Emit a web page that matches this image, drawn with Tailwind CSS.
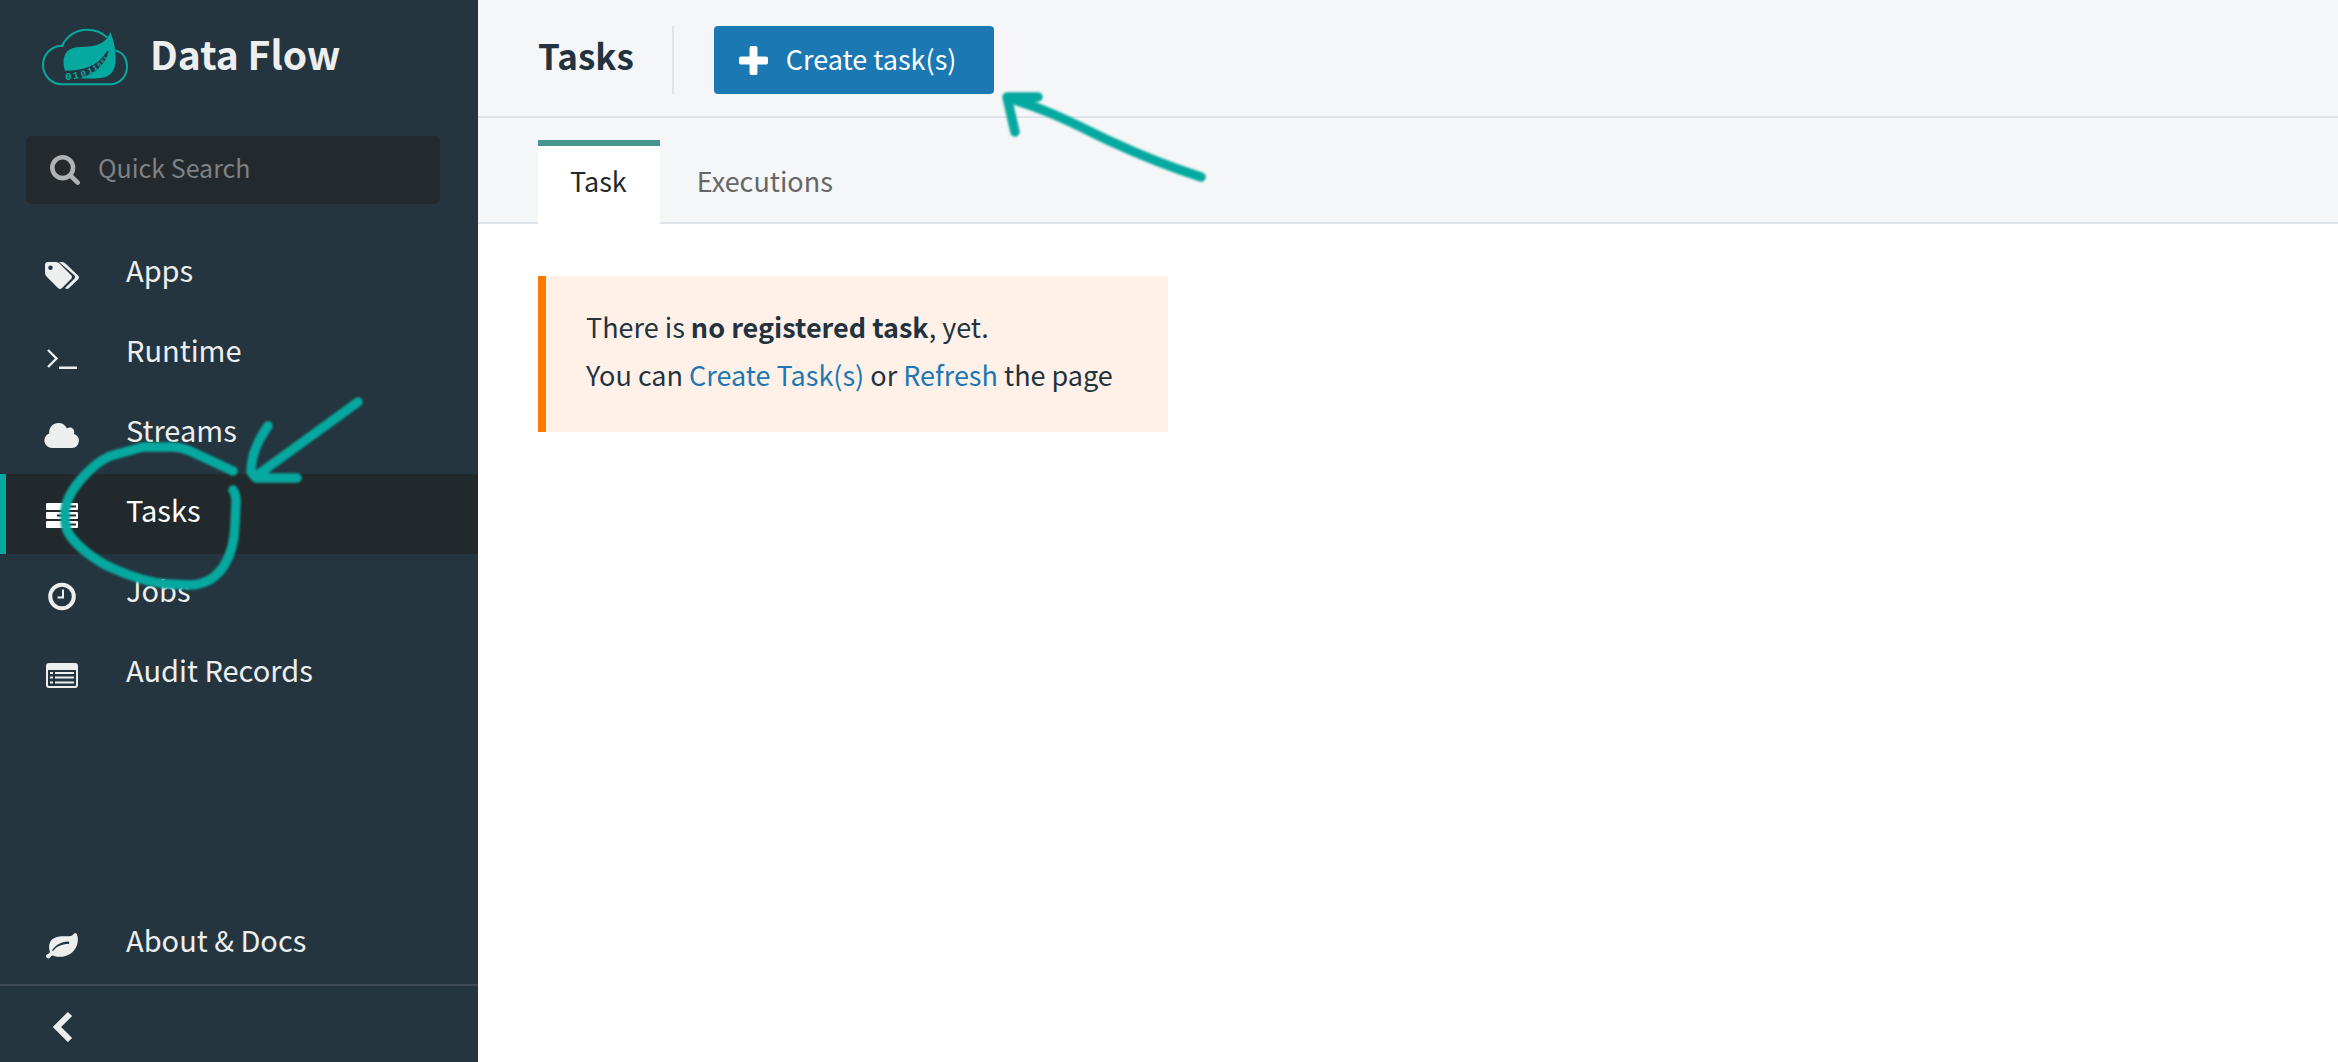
<!DOCTYPE html>
<html lang="en">
<head>
<meta charset="utf-8">
<meta name="viewport" content="width=device-width, initial-scale=1">
<title>Data Flow - Tasks</title>
<script src="https://cdn.jsdelivr.net/npm/@tailwindcss/browser@4"></script>
</head>
<body class="relative flex min-h-screen bg-white font-['Noto_Sans_CJK_SC','Open_Sans',sans-serif] text-[#22333f]">

<aside class="flex w-[478px] shrink-0 flex-col bg-[#243540] text-[#edefee]">
  <a href="#" class="flex h-[114px] items-center gap-[22px] pl-[42px]">
    <!-- Cloud with leaf -->
    <svg class="h-[58px] w-[86px]" viewBox="36 54 258 174" aria-hidden="true">
      <path d="M97 223 A58 58 0 0 1 97 107 C110 77 140 59 171 59 C196 59 216 67 232 83 M257 121 C278 128 291 146 291 170 C291 200 268 223 240 223 H97" fill="none" stroke="#06a99f" stroke-width="6"/>
      <path d="M241 66 C252 92 258 122 257 152 C255 186 238 202 210 204 C190 206 170 206 150 205 C195 192 228 162 236 124 C233 122 230 124 228 128 C203 168 160 182 105 182 C96 152 98 112 150 111 C200 111 230 100 241 66Z" fill="#06a99f"/>
      <g fill="#06a99f" font-family="Liberation Mono, monospace" font-weight="700" text-anchor="middle">
        <text x="115" y="210" font-size="34">0</text>
        <text x="139" y="206" font-size="30" transform="rotate(-8 139 206)">1</text>
        <text x="162" y="200" font-size="28" transform="rotate(-12 162 200)">0</text>
        <text x="183" y="190" font-size="26" transform="rotate(-20 183 190)">1</text>
        <text x="198" y="180" font-size="23" transform="rotate(-28 198 180)">1</text>
        <text x="212" y="169" font-size="20" transform="rotate(-38 212 169)">0</text>
        <text x="222" y="158" font-size="17" transform="rotate(-45 222 158)">0</text>
        <text x="230" y="147" font-size="15" transform="rotate(-55 230 147)">1</text>
      </g>
    </svg>
    <span class="pb-2 text-[39px] leading-[50px] font-bold">Data Flow</span>
  </a>

  <label class="mr-[38px] ml-[26px] mt-[22px] flex h-[68px] items-center gap-[18px] rounded-md bg-[#24292d] pl-[24px]">
    <svg class="size-[30px] shrink-0 text-[#b0b2b3]" viewBox="64 128 1664 1664" fill="currentColor" aria-hidden="true"><path d="M1216 832q0-185-131.500-316.500T768 384 451.500 515.500 320 832t131.500 316.500T768 1280t316.500-131.500T1216 832zm512 832q0 52-38 90t-90 38q-54 0-90-38l-343-342q-179 124-399 124-143 0-273.500-55.500t-225-150-150-225T64 832t55.500-273.500 150-225 225-150T768 128t273.500 55.500 225 150 150 225T1472 832q0 220-124 399l343 343q37 37 37 90z"/></svg>
    <input type="search" aria-label="Quick Search" placeholder="Quick Search" class="min-w-0 flex-1 bg-transparent pb-[6px] text-[25px] leading-[40px] outline-none placeholder:text-[#7e8284]">
  </label>

  <nav class="mt-[30px] flex flex-1 flex-col text-[29px] leading-[44px]" aria-label="Main">
    <a href="#" class="flex h-[80px] items-center gap-[46px] pl-[44px]">
      <svg class="size-[36px] shrink-0" viewBox="0 -3 36 36" fill="currentColor" aria-hidden="true"><path fill-rule="evenodd" d="M4 3H12Q14 3 16 5L27 16Q29 18 27 20L18 29Q16 31 14 29L3 18Q1 16 1 14V6Q1 3 4 3ZM6.500 6.500A2.200 2.200 0 1 0 6.500 11 2.200 2.200 0 1 0 6.500 6.500Z"/><path d="M15 3H18Q20 3 22 5L34 16.500Q36 18.500 34 20.500L25 29Q23 31 21 29L30 20Q32 18 30 16Z"/></svg>
      <span class="pb-[10px]">Apps</span>
    </a>
    <a href="#" class="flex h-[80px] items-center gap-[46px] pl-[44px]">
      <svg class="size-[36px] shrink-0" viewBox="0 -1 36 36" fill="none" stroke="currentColor" stroke-width="2.400" aria-hidden="true"><path d="M4 13L12.500 21.500 4 30M15 30.800H33"/></svg>
      <span class="pb-[10px]">Runtime</span>
    </a>
    <a href="#" class="flex h-[80px] items-center gap-[46px] pl-[44px]">
      <svg class="size-[36px] shrink-0" viewBox="0 -2 36 36" fill="currentColor" aria-hidden="true"><path d="M8 30A7.500 7.500 0 0 1 5.200 15.500C5 9 9 5 14.500 5 18.500 5 21.500 7 23 10.500 26.500 8 31.500 11 30 16A7.200 7.200 0 0 1 28 30Z"/></svg>
      <span class="pb-[10px]">Streams</span>
    </a>
    <a href="#" aria-current="page" class="flex h-[80px] items-center gap-[46px] border-l-6 border-[#06a99f] bg-[#22292c] pl-[38px] text-white">
      <svg class="size-[36px] shrink-0" viewBox="0 -2 36 36" fill="currentColor" aria-hidden="true"><path fill-rule="evenodd" d="M3 5H33Q34 5 34 6V11Q34 12 33 12H3Q2 12 2 11V6Q2 5 3 5ZM25 7.500V9.500H32V7.500ZM3 14H33Q34 14 34 15V20Q34 21 33 21H3Q2 21 2 20V15Q2 14 3 14ZM13 16.500V18.500H32V16.500ZM3 23H33Q34 23 34 24V29Q34 30 33 30H3Q2 30 2 29V24Q2 23 3 23ZM22 25.500V27.500H32V25.500Z"/></svg>
      <span class="pb-[10px]">Tasks</span>
    </a>
    <a href="#" class="flex h-[80px] items-center gap-[46px] pl-[44px]">
      <svg class="size-[36px] shrink-0" viewBox="0 -2 36 36" fill="none" stroke="currentColor" aria-hidden="true"><circle cx="18" cy="18.500" r="11.800" stroke-width="4"/><path d="M19 11.500V19.600H13.500" stroke-width="2"/></svg>
      <span class="pb-[10px]">Jobs</span>
    </a>
    <a href="#" class="flex h-[80px] items-center gap-[46px] pl-[44px]">
      <svg class="size-[36px] shrink-0" viewBox="0 -2 36 36" fill="currentColor" aria-hidden="true"><path fill-rule="evenodd" d="M5 5H31Q34 5 34 8V27Q34 30 31 30H5Q2 30 2 27V8Q2 5 5 5ZM4 12V27Q4 28 5 28H31Q32 28 32 27V12Z"/><path d="M6 14h3v2H6zM11 14h19v2H11zM6 18.500h3v2H6zM11 18.500h19v2H11zM6 23.500h3v2H6zM11 23.500h19v2H11z"/></svg>
      <span class="pb-[10px]">Audit Records</span>
    </a>
    <a href="#" class="mt-auto flex h-[80px] items-center gap-[46px] pl-[44px]">
      <svg class="size-[36px] shrink-0" viewBox="0 -2 36 36" fill="currentColor" aria-hidden="true"><path fill-rule="evenodd" d="M31.500 5C34 6 34.500 12 33 17 30 26 20 31 10 28 8 27 7 28 6 30 4 31 2 30 2 28 2 26.500 5 26 6 24 4 18 5 11 13 9 19 7.500 25 9 28 7.500 29.500 6.500 30 5 31.500 5ZM9 23C13 18 18 16 24 16 26 16 25.500 13.500 24 13.500 17 14 12 17 8.500 21.500 8 23 8.500 23.500 9 23Z"/></svg>
      <span class="pb-[10px]">About &amp; Docs</span>
    </a>
  </nav>

  <button type="button" aria-label="Collapse menu" class="flex h-[78px] items-center border-t-2 border-[#3e4a54] pl-[44px]">
    <svg class="size-[36px]" viewBox="0 -5 36 36" fill="none" stroke="currentColor" stroke-width="6" aria-hidden="true"><path d="M26 3L13 16 26 29"/></svg>
  </button>
</aside>

<main class="min-w-0 flex-1">
  <header class="flex h-[118px] items-center border-b-2 border-[#dfe4ea] bg-[#f5f6f8] px-[60px] pt-1">
    <h1 class="pb-[10px] text-[35px] leading-[50px] font-bold">Tasks</h1>
    <div class="ml-[38px] flex border-l-2 border-[#dfe4ea] pl-[40px]">
      <button type="button" class="flex h-[68px] items-center gap-[18px] rounded-sm bg-[#1b78b3] pr-[38px] pl-[25px] text-[27px] leading-[40px] text-white">
        <svg class="size-[29px]" viewBox="192 128 1408 1408" fill="currentColor" aria-hidden="true"><path d="M1600 736v192q0 40-28 68t-68 28h-416v416q0 40-28 68t-68 28H800q-40 0-68-28t-28-68v-416H288q-40 0-68-28t-28-68V736q0-40 28-68t68-28h416V224q0-40 28-68t68-28h192q40 0 68 28t28 68v416h416q40 0 68 28t28 68z"/></svg>
        <span class="pb-[2px]">Create task(s)</span>
      </button>
    </div>
  </header>

  <nav aria-label="Task views" class="flex h-[106px] items-end border-b-2 border-[#dfe4ea] bg-[#f5f6f8] px-[60px] text-[27px] leading-[40px]">
    <a href="#" aria-current="page" class="-mb-[2px] h-[84px] border-t-6 border-[#47968e] bg-white pt-[15px] pr-[33px] pl-[32px] text-[#22292c]">Task</a>
    <a href="#" class="h-[82px] px-[37px] pt-[21px] text-[#666]">Executions</a>
  </nav>

  <section class="px-[60px] pt-[52px]">
    <div class="w-fit border-l-8 border-[#ff7a00] bg-[#fff1e8] pt-[27px] pr-[55px] pb-[33px] pl-[40px] text-[27px] leading-[48px]">
      <p>There is <strong class="font-bold">no registered task</strong>, yet.</p>
      <p>You can <a href="#" class="text-[#1b78b3]">Create Task(s)</a> or <a href="#" class="text-[#1b78b3]">Refresh</a> the page</p>
    </div>
  </section>
</main>

<!-- Hand-drawn annotations -->
<svg class="pointer-events-none absolute top-0 left-0 h-[620px] w-[1240px] blur-[1px]" viewBox="0 0 1240 620" fill="none" stroke="#06a99f" stroke-width="9.500" stroke-linecap="round" stroke-linejoin="round" aria-hidden="true">
  <path d="M233 471L190 451Q180 447 172 447H143L110 456C92 464 65 492 65 513C65 522 65 528 69 534C78 548 98 562 112 568C130 576 150 583 168 584L190 585C222 584 234 554 235 525L236 502Q236 494 233 490"/>
  <path d="M358 402L256 476M268 426Q251 450 251 472L256 478H297"/>
  <path d="M1201 177C1170 167 1140 155 1112 142C1082 128 1050 110 1008 98M1038 97H1007L1015 132"/>
</svg>
</body>
</html>
